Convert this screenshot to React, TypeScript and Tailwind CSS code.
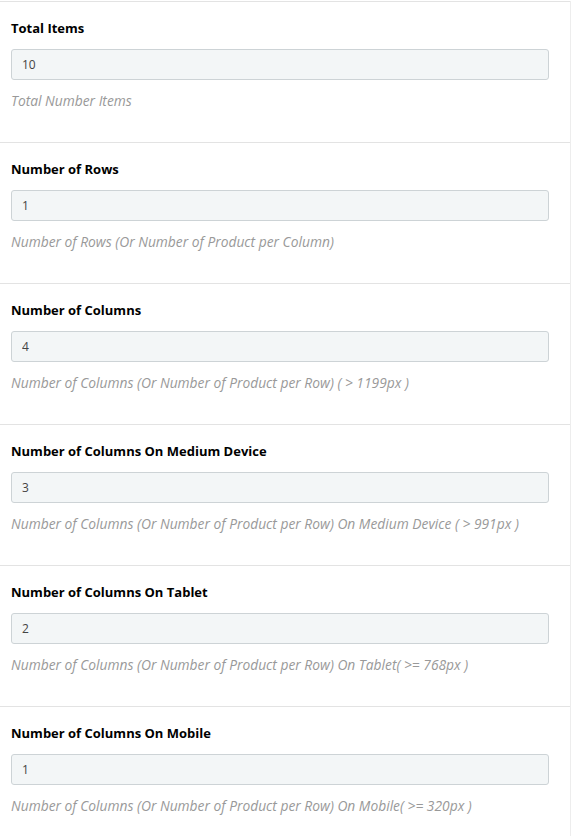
const fields = [
  { label: "Total Items", value: "10", help: "Total Number Items" },
  { label: "Number of Rows", value: "1", help: "Number of Rows (Or Number of Product per Column)" },
  { label: "Number of Columns", value: "4", help: "Number of Columns (Or Number of Product per Row) ( > 1199px )" },
  {
    label: "Number of Columns On Medium Device",
    value: "3",
    help: "Number of Columns (Or Number of Product per Row) On Medium Device ( > 991px )",
  },
  {
    label: "Number of Columns On Tablet",
    value: "2",
    help: "Number of Columns (Or Number of Product per Row) On Tablet( >= 768px )",
  },
  {
    label: "Number of Columns On Mobile",
    value: "1",
    help: "Number of Columns (Or Number of Product per Row) On Mobile( >= 320px )",
  },
];

export default function App() {
  return (
    <div className="min-h-[836px] bg-white pt-px font-['Open_Sans',sans-serif]">
      <div className="w-[571px] border-r border-[#ededed]">
        {fields.map((f) => (
          <div key={f.label} className="border-t border-[#e3e3e3] px-[11px] pt-[17px] pb-[32px]">
            <label className="block text-[13px] leading-[18px] font-bold text-black">{f.label}</label>
            <input
              readOnly
              value={f.value}
              className="mt-[12px] block h-[31px] w-[538px] rounded-[3px] border border-[#cdd3d6] bg-[#f3f6f7] px-[10px] text-[12px] text-[#444] outline-none"
            />
            <p className="mt-[12px] text-[13.8px] leading-[18px] italic text-[#999]">{f.help}</p>
          </div>
        ))}
      </div>
    </div>
  );
}
